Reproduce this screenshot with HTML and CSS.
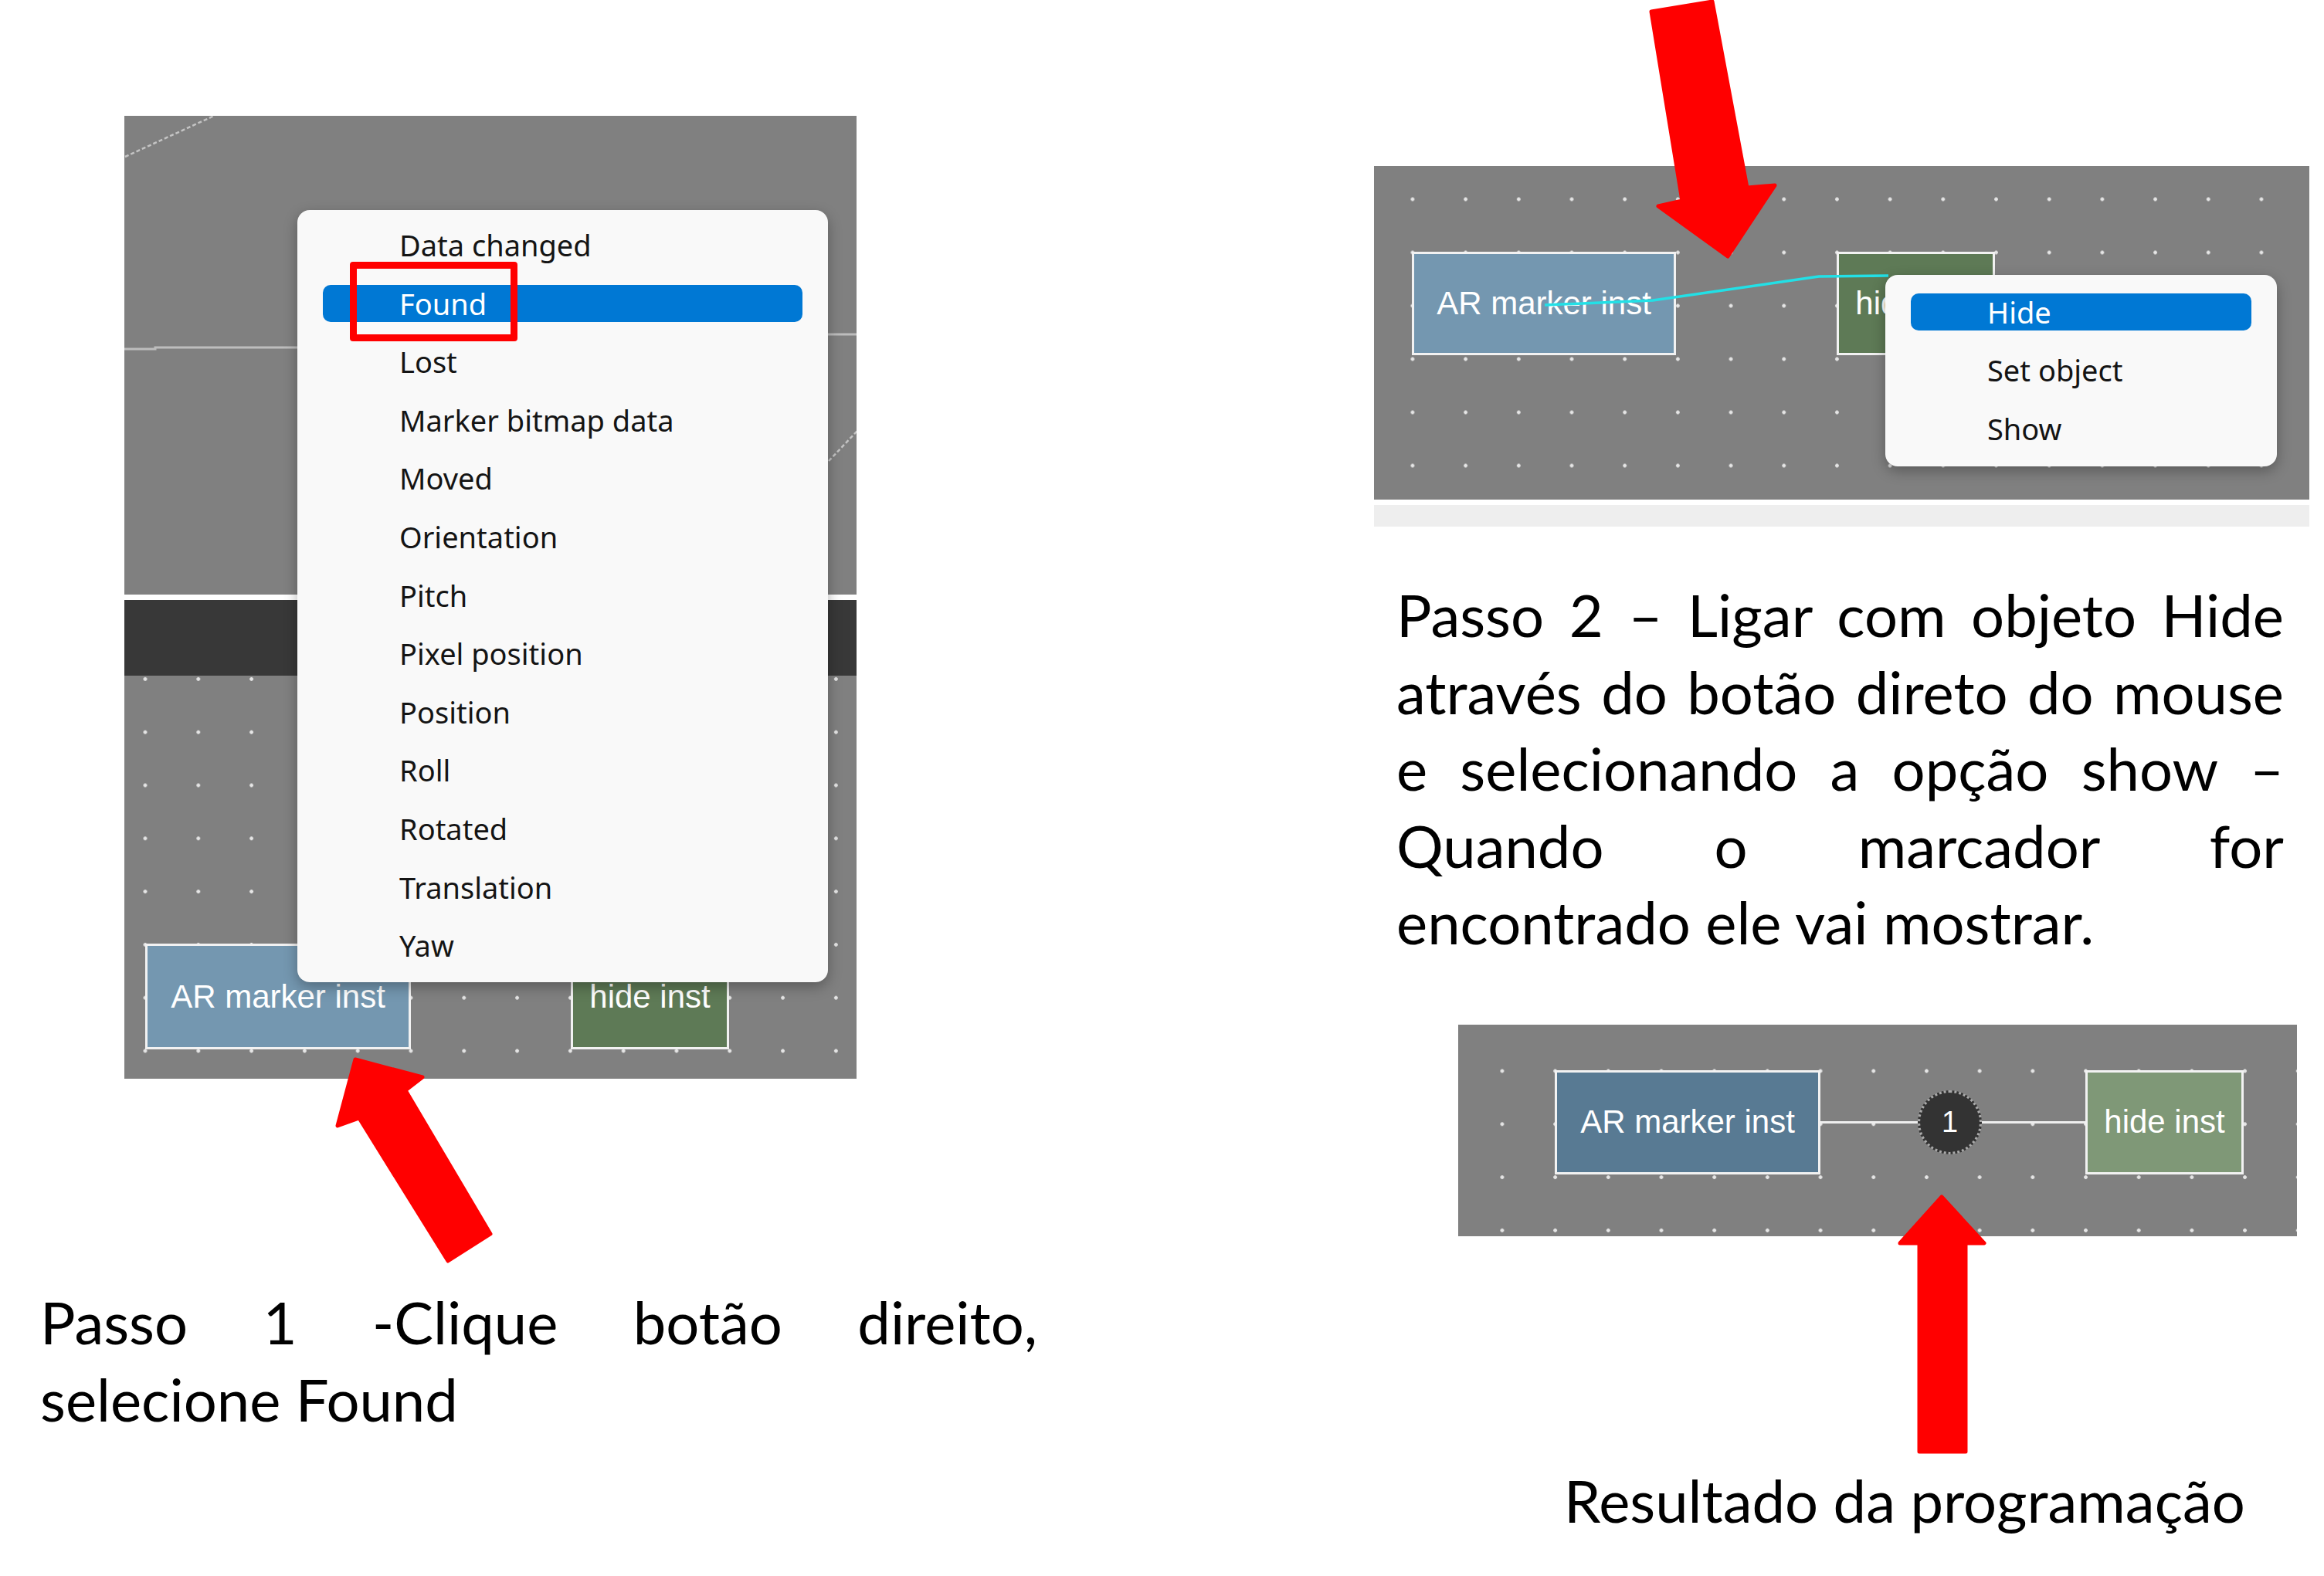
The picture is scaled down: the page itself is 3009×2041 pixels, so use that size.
FILE: index.html
```html
<!DOCTYPE html>
<html lang="pt">
<head>
<meta charset="utf-8">
<title>Passos - AR marker</title>
<link rel="stylesheet" href="styles.css">
</head>
<body>
<main class="slide">
  <section class="col col-left">
    <div class="panel panel-one">
      <div class="region region-top">
        <svg class="faint" width="948" height="620" viewBox="0 0 948 620">
          <line class="dash" x1="1" y1="53" x2="116" y2="0"/>
          <polyline class="solid" points="0,302 40,302 40,300 224,300"/>
          <line class="solid" x1="911" y1="283" x2="948" y2="283"/>
          <line class="dash" x1="912" y1="447" x2="949" y2="408"/>
        </svg>
      </div>
      <div class="region-rule"></div>
      <div class="region-band"></div>
      <div class="region region-grid grid-one">
        <div class="node node-ar">AR marker inst</div>
        <div class="node node-hide">hide inst</div>
      </div>
      <ul class="menu menu-events">
        <li>Data changed</li>
        <li class="active">Found</li>
        <li>Lost</li>
        <li>Marker bitmap data</li>
        <li>Moved</li>
        <li>Orientation</li>
        <li>Pitch</li>
        <li>Pixel position</li>
        <li>Position</li>
        <li>Roll</li>
        <li>Rotated</li>
        <li>Translation</li>
        <li>Yaw</li>
      </ul>
      <div class="mark"></div>
    </div>
    <p class="caption caption-one">
      <span class="jline">Passo 1 -Clique botão direito,</span>
      <span class="line">selecione Found</span>
    </p>
  </section>

  <section class="col col-right">
    <div class="panel panel-two">
      <div class="node node-ar node-ar-two">AR marker inst</div>
      <div class="node node-hide">hide inst</div>
      <svg class="wire" width="1211" height="432" viewBox="0 0 1211 432">
        <polyline points="221,180 361,174 576,143 666,142"/>
      </svg>
      <ul class="menu menu-actions">
        <li class="active">Hide</li>
        <li>Set object</li>
        <li>Show</li>
      </ul>
    </div>
    <div class="strip"></div>
    <p class="caption caption-two">
      <span class="jline">Passo 2 – Ligar com objeto Hide</span>
      <span class="jline">através do botão direto do mouse</span>
      <span class="jline">e selecionando a opção show –</span>
      <span class="jline">Quando o marcador for</span>
      <span class="line">encontrado ele vai mostrar.</span>
    </p>
    <div class="panel panel-three">
      <div class="node node-ar node-ar-three">AR marker inst</div>
      <div class="link link-left"></div>
      <div class="badge">1</div>
      <div class="link link-right"></div>
      <div class="node node-hide node-hide-three">hide inst</div>
    </div>
    <p class="caption caption-three">Resultado da programação</p>
  </section>

  <svg class="arrows" width="3009" height="2041" viewBox="0 0 3009 2041">
    <polygon points="460,1372 547,1395 525,1412 635,1598 580,1633 465,1448 437,1458"/>
    <polygon points="2138,15 2217,2 2262,243 2298,240 2237,332 2147,267 2178,260"/>
    <polygon points="2514,1550 2569,1610 2545,1610 2545,1880 2485,1880 2485,1610 2460,1610"/>
  </svg>
</main>
</body>
</html>
```

FILE: styles.css
```css
* {
  box-sizing: border-box;
  margin: 0;
  padding: 0;
}

html,
body {
  background: #ffffff;
}

body {
  width: 3009px;
  height: 2041px;
  overflow: hidden;
}

.slide {
  position: relative;
  width: 3009px;
  height: 2041px;
  display: grid;
  grid-template-columns: 1779px 1230px;
  font-family: Lato, "Liberation Sans", sans-serif;
  color: #000000;
}

.col-left {
  padding-top: 150px;
}

.col-right {
  padding-top: 215px;
}

/* ---------- canvas panels ---------- */
.panel {
  position: relative;
  background-color: #808080;
}

.panel-one {
  margin-left: 161px;
  width: 948px;
  height: 1247px;
  display: flex;
  flex-direction: column;
}

.region-top {
  position: relative;
  height: 620px;
}

.faint {
  display: block;
}

.faint .dash {
  stroke: #c4c4c4;
  stroke-width: 2.5;
  stroke-dasharray: 5 3;
  fill: none;
}

.faint .solid {
  stroke: #bdbdbd;
  stroke-width: 3;
  fill: none;
}

.region-rule {
  height: 7px;
  background: #ffffff;
}

.region-band {
  height: 98px;
  background: #383838;
}

.region-grid {
  flex: 1;
  display: flex;
  align-items: flex-start;
}

.grid-one {
  padding: 347px 0 0 27px;
  gap: 207px;
  background-image: radial-gradient(circle at center, #e6e6e6 0 2px, rgba(230, 230, 230, 0) 2.7px);
  background-size: 68.8px 68.8px;
  background-position: -7.4px -30px;
}

.panel-two {
  width: 1211px;
  height: 432px;
  display: flex;
  align-items: flex-start;
  gap: 208px;
  padding: 111px 0 0 49px;
  background-image: radial-gradient(circle at center, #e6e6e6 0 2px, rgba(230, 230, 230, 0) 2.7px);
  background-size: 68.7px 69px;
  background-position: 15.6px 8.5px;
}

.strip {
  width: 1211px;
  height: 28px;
  margin-top: 7px;
  background: #eeeeee;
}

.panel-three {
  margin: 83px 0 0 109px;
  width: 1086px;
  height: 274px;
  display: flex;
  align-items: center;
  align-content: flex-start;
  padding: 59px 0 80px 125px;
  background-image: radial-gradient(circle at center, #e6e6e6 0 2px, rgba(230, 230, 230, 0) 2.7px);
  background-size: 68.7px 68.8px;
  background-position: 22.6px 25.6px;
}

/* ---------- nodes ---------- */
.node {
  display: flex;
  align-items: center;
  justify-content: center;
  height: 137px;
  border: 3px solid #f2f2f2;
  font-family: "Liberation Sans", Arial, sans-serif;
  font-size: 42px;
  color: #ffffff;
  white-space: nowrap;
  flex: none;
}

.node-ar {
  width: 344px;
  background: #7497b0;
}

.node-hide {
  width: 205px;
  background: #5e7a56;
}

.node-ar-two {
  width: 342px;
  height: 134px;
}

.panel-two .node-hide {
  height: 134px;
}

.node-ar-three {
  height: 135px;
  background: #587a93;
}

.node-hide-three {
  height: 135px;
  background: #7f9877;
}

.link {
  height: 3px;
  background: #efefef;
  flex: none;
}

.link-left {
  width: 126px;
}

.link-right {
  width: 134px;
}

.badge {
  flex: none;
  width: 83px;
  height: 83px;
  border-radius: 50%;
  background: #333333;
  border: 3px dotted #a9a9a9;
  display: flex;
  align-items: center;
  justify-content: center;
  font-family: "Liberation Sans", Arial, sans-serif;
  font-size: 38px;
  color: #ffffff;
}

.wire {
  position: absolute;
  left: 0;
  top: 0;
  pointer-events: none;
}

.wire polyline {
  fill: none;
  stroke: #22e0e6;
  stroke-width: 3.5;
}

/* ---------- context menus ---------- */
.menu {
  position: absolute;
  list-style: none;
  background: #f9f9f9;
  border-radius: 16px;
  box-shadow: 0 6px 18px rgba(0, 0, 0, 0.3);
  font-family: "Noto Sans", "Open Sans", sans-serif;
  font-size: 38px;
  color: #141414;
  display: flex;
  flex-direction: column;
  gap: 27.6px;
}

.menu li {
  height: 48px;
  line-height: 48px;
  margin: 0 33px;
  padding-left: 99px;
  border-radius: 10px;
  white-space: nowrap;
}

.menu li.active {
  background: #0078d4;
  color: #ffffff;
}

.menu-events {
  left: 224px;
  top: 122px;
  width: 687px;
  height: 1000px;
  padding-top: 21px;
}

.menu-actions {
  left: 662px;
  top: 141px;
  width: 507px;
  height: 248px;
  padding-top: 23.5px;
}

.mark {
  position: absolute;
  left: 292px;
  top: 189px;
  width: 217px;
  height: 103px;
  border: 9px solid #ff0000;
  border-radius: 4px;
}

/* ---------- captions ---------- */
.caption {
  font-size: 76px;
  line-height: 99.5px;
}

.caption .jline,
.caption .line {
  display: block;
}

.caption .jline {
  text-align: justify;
  text-align-last: justify;
}

.caption-one {
  margin: 265px 0 0 52px;
  width: 1291px;
}

.caption-two {
  margin: 64px 0 0 29px;
  width: 1149px;
}

.caption-three {
  margin: 292px 0 0 246px;
  white-space: nowrap;
}

/* ---------- red arrows ---------- */
.arrows {
  position: absolute;
  left: 0;
  top: 0;
  pointer-events: none;
}

.arrows polygon {
  fill: #ff0000;
  stroke: #ff0000;
  stroke-width: 5;
  stroke-linejoin: round;
}
```
